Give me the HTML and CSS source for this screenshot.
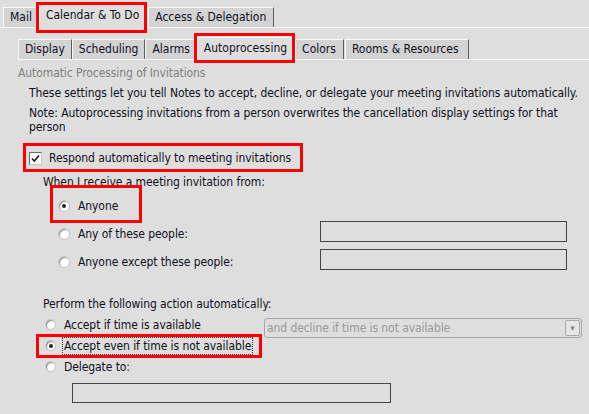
FILE: index.html
```html
<!DOCTYPE html>
<html>
<head>
<meta charset="utf-8">
<link rel="stylesheet" href="styles.css">
</head>
<body>
<div class="tabs tabs-top">
  <div class="tab">Mail</div>
  <div class="tab sel hl hl-cal">Calendar &amp; To Do</div>
  <div class="tab">Access &amp; Delegation</div>
</div>
<div class="tabs tabs-sub">
  <div class="tab">Display</div>
  <div class="tab">Scheduling</div>
  <div class="tab">Alarms</div>
  <div class="tab sel hl hl-auto">Autoprocessing</div>
  <div class="tab wide">Colors</div>
  <div class="tab wide">Rooms &amp; Resources</div>
</div>
<div class="content">
  <div class="heading">Automatic Processing of Invitations</div>
  <p class="desc">These settings let you tell Notes to accept, decline, or delegate your meeting invitations automatically.</p>
  <p class="desc">Note: Autoprocessing invitations from a person overwrites the cancellation display settings for that<br>person</p>
  <div class="check-row hl hl-check">
    <span class="checkbox"><svg width="9" height="9" viewBox="0 0 9 9"><path d="M1 4.5 L3.3 7 L8 1.5" fill="none" stroke="#1a1a1a" stroke-width="1.6"/></svg></span>
    <span>Respond automatically to meeting invitations</span>
  </div>
  <div class="label">When I receive a meeting invitation from:</div>
  <div class="opts1">
    <div class="opt1"><span class="pair hl hl-any"><span class="radio on"></span><span>Anyone</span></span></div>
    <div class="opt1"><span class="radio"></span><span>Any of these people:</span><span class="field"></span></div>
    <div class="opt1"><span class="radio"></span><span>Anyone except these people:</span><span class="field"></span></div>
  </div>
  <div class="label label2">Perform the following action automatically:</div>
  <div class="opts2">
    <div class="opt2"><span class="radio"></span><span>Accept if time is available</span>
      <span class="select"><span class="select-text">and decline if time is not available</span><span class="select-btn">&#9662;</span></span>
    </div>
    <div class="opt2"><span class="pair hl hl-even"><span class="radio on"></span><span class="focus">Accept even if time is not available</span></span></div>
    <div class="opt2"><span class="radio"></span><span>Delegate to:</span></div>
  </div>
  <div class="field delegate"></div>
</div>
</body>
</html>
```

FILE: styles.css
```css
* { box-sizing: border-box; }
body {
  margin: 0;
  width: 589px;
  height: 414px;
  overflow: hidden;
  background: #dedede;
  font-family: "DejaVu Sans Condensed", "DejaVu Sans", sans-serif;
  font-size: 12px;
  letter-spacing: -0.08px;
  color: #10101a;
}
.tabs {
  display: flex;
  align-items: flex-end;
  border-bottom: 1px solid #f6f6f6;
}
.tabs-top { height: 28px; padding-left: 3px; }
.tabs-sub { height: 32px; margin-left: 18px; }
.tab {
  position: relative;
  height: 20px;
  line-height: 18px;
  padding: 0 6px;
  background: #d3d3d3;
  border-left: 1px solid #f8f8f8;
  border-top: 1px solid #f8f8f8;
  border-right: 1px solid #5c5c5c;
  white-space: nowrap;
  letter-spacing: 0;
}
.tab.sel {
  height: 24px;
  line-height: 20px;
  margin-bottom: -1px;
  background: #dedede;
  z-index: 1;
}
.tabs-top .tab:last-child { margin-left: 2px; padding-right: 7px; }
.tabs-sub .tab { height: 20px; line-height: 18px; }
.tabs-sub .tab.sel { height: 23px; line-height: 20px; margin-right: 1px; }
.tabs-sub .tab.wide { padding: 0 7px 0 6px; }
.tabs-sub .tab:last-child { padding-right: 9px; margin-left: 1px; }

.hl { position: relative; }
.hl::after {
  content: "";
  position: absolute;
  border: 3px solid #ff0000;
  pointer-events: none;
}
.hl-cal::after { left: -4px; top: -3px; right: -2px; bottom: -5px; }
.hl-auto::after { left: -4px; top: -5px; right: -2px; bottom: -3px; }
.hl-check::after { left: -6px; top: -5px; right: -12px; bottom: -4px; }
.hl-any::after { left: -8px; top: -14px; right: -24px; bottom: -10px; }
.hl-even::after { left: -9px; top: -5px; right: -11px; bottom: -5px; }

.content { padding-left: 18px; }
.heading { color: #808080; line-height: 14px; margin-top: 6px; }
.desc { margin: 6px 0 0 11px; line-height: 14px; }
.check-row {
  display: flex;
  align-items: center;
  width: fit-content;
  height: 20px;
  margin: 14px 0 0 11px;
  gap: 7px;
}
.checkbox {
  width: 13px;
  height: 13px;
  background: #fff;
  border: 1px solid #c8c8c8;
  border-top-color: #6a6a6a;
  border-left-color: #6a6a6a;
  display: flex;
  align-items: center;
  justify-content: center;
}
.checkbox svg { display: block; }
.label { margin: 7px 0 0 25px; line-height: 14px; }
.label2 { margin-top: 21px; }

.pair { display: flex; align-items: center; gap: 8px; }
.opts1 { margin: 3px 22px 0 40px; }
.opt1 { display: flex; align-items: center; height: 28px; gap: 8px; }
.radio {
  flex: none;
  width: 12px;
  height: 12px;
  border-radius: 50%;
  background: #fff;
  border: 1px solid #c4c4c4;
  box-shadow: inset 1px 1px 1px #8a8a8a;
  position: relative;
}
.radio.on::after {
  content: "";
  position: absolute;
  left: 3px;
  top: 3px;
  width: 4px;
  height: 4px;
  border-radius: 50%;
  background: #222;
}
.field {
  display: block;
  height: 21px;
  border: 1px solid #444;
  background: #dedede;
}
.opt1 .field { margin-left: auto; width: 247px; margin-bottom: 5px; }

.opts2 { margin: 3px 7px 0 27px; }
.opt2 { display: flex; align-items: center; height: 21px; gap: 8px; }
.opt2 .radio { width: 11px; height: 11px; }
.opt2 .radio.on::after { left: 2.5px; top: 2.5px; }
.focus { outline: 1px dotted #333; outline-offset: 1px; }
.select {
  align-self: flex-start;
  margin: 4px 0 0 auto;
  width: 318px;
  height: 20px;
  border: 1px solid #a8a8a8;
  border-radius: 3px;
  display: flex;
  align-items: center;
  padding: 0 1px 0 2px;
}
.select-text { color: #999; flex: 1; white-space: nowrap; }
.select-btn {
  width: 15px;
  height: 16px;
  border: 1px solid #a8a8a8;
  border-radius: 2px;
  background: #e6e6e6;
  color: #808080;
  font-size: 9px;
  line-height: 14px;
  text-align: center;
}
.delegate { margin: 6px 0 0 54px; width: 319px; height: 20px; }
```
